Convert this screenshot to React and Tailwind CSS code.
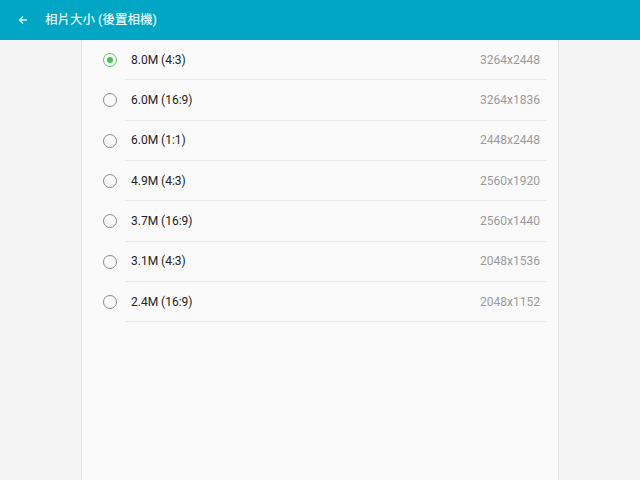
import React, { useState } from "react";

const sizes = [
  { label: "8.0M (4:3)", res: "3264x2448" },
  { label: "6.0M (16:9)", res: "3264x1836" },
  { label: "6.0M (1:1)", res: "2448x2448" },
  { label: "4.9M (4:3)", res: "2560x1920" },
  { label: "3.7M (16:9)", res: "2560x1440" },
  { label: "3.1M (4:3)", res: "2048x1536" },
  { label: "2.4M (16:9)", res: "2048x1152" },
];

const App = () => {
  const [selected, setSelected] = useState(0);

  return (
    <div
      className="w-[640px] h-[480px] flex flex-col bg-[#f4f4f4] overflow-hidden"
      style={{ fontFamily: "Roboto, 'Noto Sans CJK TC', sans-serif" }}
    >
      {/* Header */}
      <div className="h-10 shrink-0 bg-[#02a6c5] flex items-center">
        <button className="w-[45px] h-10 flex items-center justify-center">
          <svg width="10" height="10" viewBox="0 0 10 10" fill="none">
            <path
              d="M9 5H1.5M5 1.5L1.5 5L5 8.5"
              stroke="#d8f1f6"
              strokeWidth="1.3"
            />
          </svg>
        </button>
        <h1 className="text-[12.5px] font-medium text-[#e6f6fa]">
          相片大小 (後置相機)
        </h1>
      </div>

      {/* List panel */}
      <div className="flex-1 flex">
        <div className="w-[81px] shrink-0" />
        <div className="w-[478px] bg-[#fafafa] border-x border-[#e4e4e4]">
          {sizes.map((s, i) => (
            <div
              key={s.res + s.label}
              onClick={() => setSelected(i)}
              className="h-[40.33px] flex items-center cursor-pointer"
            >
              <div className="w-[43px] shrink-0 flex pl-[21px]">
                {selected === i ? (
                  <span className="w-[14px] h-[14px] rounded-full border-[1.5px] border-[#56c95d] flex items-center justify-center">
                    <span className="w-[6px] h-[6px] rounded-full bg-[#47c24f]" />
                  </span>
                ) : (
                  <span className="w-[14px] h-[14px] rounded-full border-[1.5px] border-[#8a8a8a]" />
                )}
              </div>
              <div className="flex-1 h-full flex items-center justify-between border-b border-[#e8e8e8] pl-[6px] pr-[6px] mr-[12px]">
                <span className="text-[12px] text-[#222]">{s.label}</span>
                <span className="text-[12px] text-[#9a9a9a]">{s.res}</span>
              </div>
            </div>
          ))}
        </div>
        <div className="flex-1" />
      </div>
    </div>
  );
};

export default App;
